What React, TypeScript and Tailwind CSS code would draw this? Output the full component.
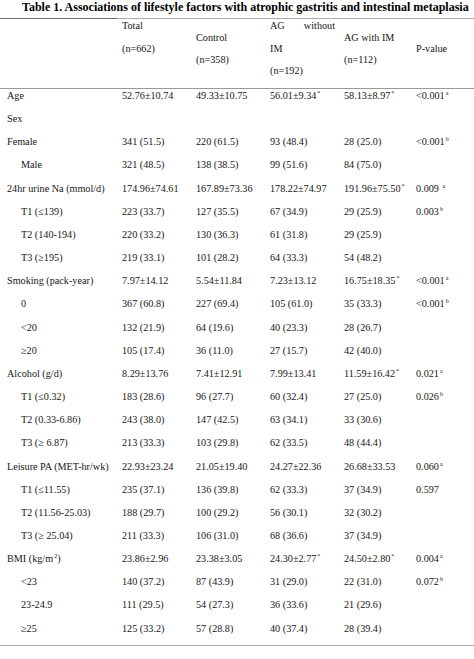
import React from "react";

type Row = {
  label: string;
  sub?: boolean;
  cells?: React.ReactNode[];
  p?: React.ReactNode;
};

const S = ({ c }: { c: string }) => (
  <sup className="text-[6px] relative -top-[4px] ml-[1px]">{c}</sup>
);

const rows: Row[] = [
  { label: "Age", cells: ["52.76±10.74", "49.33±10.75", <>56.01±9.34<S c="*" /></>, <>58.13±8.97<S c="*" /></>], p: <>&lt;0.001<S c="a" /></> },
  { label: "Sex" },
  { label: "Female", cells: ["341 (51.5)", "220 (61.5)", "93 (48.4)", "28 (25.0)"], p: <>&lt;0.001<S c="b" /></> },
  { label: "Male", sub: true, cells: ["321 (48.5)", "138 (38.5)", "99 (51.6)", "84 (75.0)"] },
  { label: "24hr urine Na (mmol/d)", cells: ["174.96±74.61", "167.89±73.36", "178.22±74.97", <>191.96±75.50<S c="*" /></>], p: <>0.009 <S c="a" /></> },
  { label: "T1 (≤139)", sub: true, cells: ["223 (33.7)", "127 (35.5)", "67 (34.9)", "29 (25.9)"], p: <>0.003<S c="b" /></> },
  { label: "T2 (140-194)", sub: true, cells: ["220 (33.2)", "130 (36.3)", "61 (31.8)", "29 (25.9)"] },
  { label: "T3 (≥195)", sub: true, cells: ["219 (33.1)", "101 (28.2)", "64 (33.3)", "54 (48.2)"] },
  { label: "Smoking (pack-year)", cells: ["7.97±14.12", "5.54±11.84", "7.23±13.12", <>16.75±18.35<S c="*" /></>], p: <>&lt;0.001<S c="a" /></> },
  { label: "0", sub: true, cells: ["367 (60.8)", "227 (69.4)", "105 (61.0)", "35 (33.3)"], p: <>&lt;0.001<S c="b" /></> },
  { label: "<20", sub: true, cells: ["132 (21.9)", "64 (19.6)", "40 (23.3)", "28 (26.7)"] },
  { label: "≥20", sub: true, cells: ["105 (17.4)", "36 (11.0)", "27 (15.7)", "42 (40.0)"] },
  { label: "Alcohol (g/d)", cells: ["8.29±13.76", "7.41±12.91", "7.99±13.41", <>11.59±16.42<S c="*" /></>], p: <>0.021<S c="a" /></> },
  { label: "T1 (≤0.32)", sub: true, cells: ["183 (28.6)", "96 (27.7)", "60 (32.4)", "27 (25.0)"], p: <>0.026<S c="b" /></> },
  { label: "T2 (0.33-6.86)", sub: true, cells: ["243 (38.0)", "147 (42.5)", "63 (34.1)", "33 (30.6)"] },
  { label: "T3 (≥ 6.87)", sub: true, cells: ["213 (33.3)", "103 (29.8)", "62 (33.5)", "48 (44.4)"] },
  { label: "Leisure PA (MET-hr/wk)", cells: ["22.93±23.24", "21.05±19.40", "24.27±22.36", "26.68±33.53"], p: <>0.060<S c="a" /></> },
  { label: "T1 (≤11.55)", sub: true, cells: ["235 (37.1)", "136 (39.8)", "62 (33.3)", "37 (34.9)"], p: "0.597" },
  { label: "T2 (11.56-25.03)", sub: true, cells: ["188 (29.7)", "100 (29.2)", "56 (30.1)", "32 (30.2)"] },
  { label: "T3 (≥ 25.04)", sub: true, cells: ["211 (33.3)", "106 (31.0)", "68 (36.6)", "37 (34.9)"] },
  { label: "BMI", cells: ["23.86±2.96", "23.38±3.05", <>24.30±2.77<S c="*" /></>, <>24.50±2.80<S c="*" /></>], p: <>0.004<S c="a" /></> },
  { label: "<23", sub: true, cells: ["140 (37.2)", "87 (43.9)", "31 (29.0)", "22 (31.0)"], p: <>0.072<S c="b" /></> },
  { label: "23-24.9", sub: true, cells: ["111 (29.5)", "54 (27.3)", "36 (33.6)", "21 (29.6)"] },
  { label: "≥25", sub: true, cells: ["125 (33.2)", "57 (28.8)", "40 (37.4)", "28 (39.4)"] },
];

const grid = "grid grid-cols-[122px_74px_74px_74px_72px_1fr]";

export default function App() {
  return (
    <div className="w-[474px] h-[659px] bg-white overflow-hidden text-[#161616] font-['Liberation_Serif','Times_New_Roman',serif]">
      <div className="h-[18px] pl-[22px] pt-[1px] whitespace-nowrap text-[12px] leading-[12px] font-bold text-black">
        Table 1. Associations of lifestyle factors with atrophic gastritis and intestinal metaplasia
      </div>
      <div className="flex h-[1px]">
        <div className="w-[117px] bg-[#6a6a6a]" />
        <div className="flex-1 bg-[#a8a8a8]" />
      </div>
      <div className={`${grid} h-[69px] text-[10.2px] leading-[14px]`}>
        <div />
        <div className="flex flex-col">
          <div className="h-[22.5px]">Total</div>
          <div className="h-[22.5px]">(n=662)</div>
        </div>
        <div className="flex flex-col pt-[11.5px]">
          <div className="h-[22.5px]">Control</div>
          <div className="h-[22.5px]">(n=358)</div>
        </div>
        <div className="flex flex-col">
          <div className="h-[22.5px] flex justify-between w-[65px]">
            <span>AG</span>
            <span>without</span>
          </div>
          <div className="h-[22.5px]">IM</div>
          <div className="h-[22.5px]">(n=192)</div>
        </div>
        <div className="flex flex-col pt-[11.5px]">
          <div className="h-[22.5px]">AG with IM</div>
          <div className="h-[22.5px]">(n=112)</div>
        </div>
        <div className="pt-[22.5px]">P-value</div>
      </div>
      <div className="h-[1px] bg-[#9a9a9a]" />
      <div className="text-[10.2px] leading-[14px]">
        {rows.map((r, i) => (
          <div key={i} className={`${grid} h-[23.17px]`}>
            <div className={r.sub ? "pl-[21px]" : "pl-[7px]"}>
              {r.label === "BMI" ? (
                <>
                  BMI (kg/m<S c="2" />)
                </>
              ) : (
                r.label
              )}
            </div>
            {[0, 1, 2, 3].map((j) => (
              <div key={j} className="whitespace-nowrap">
                {r.cells ? r.cells[j] : null}
              </div>
            ))}
            <div className="whitespace-nowrap">{r.p ?? null}</div>
          </div>
        ))}
      </div>
      <div className="h-[1px] bg-[#a8a8a8]" />
    </div>
  );
}
